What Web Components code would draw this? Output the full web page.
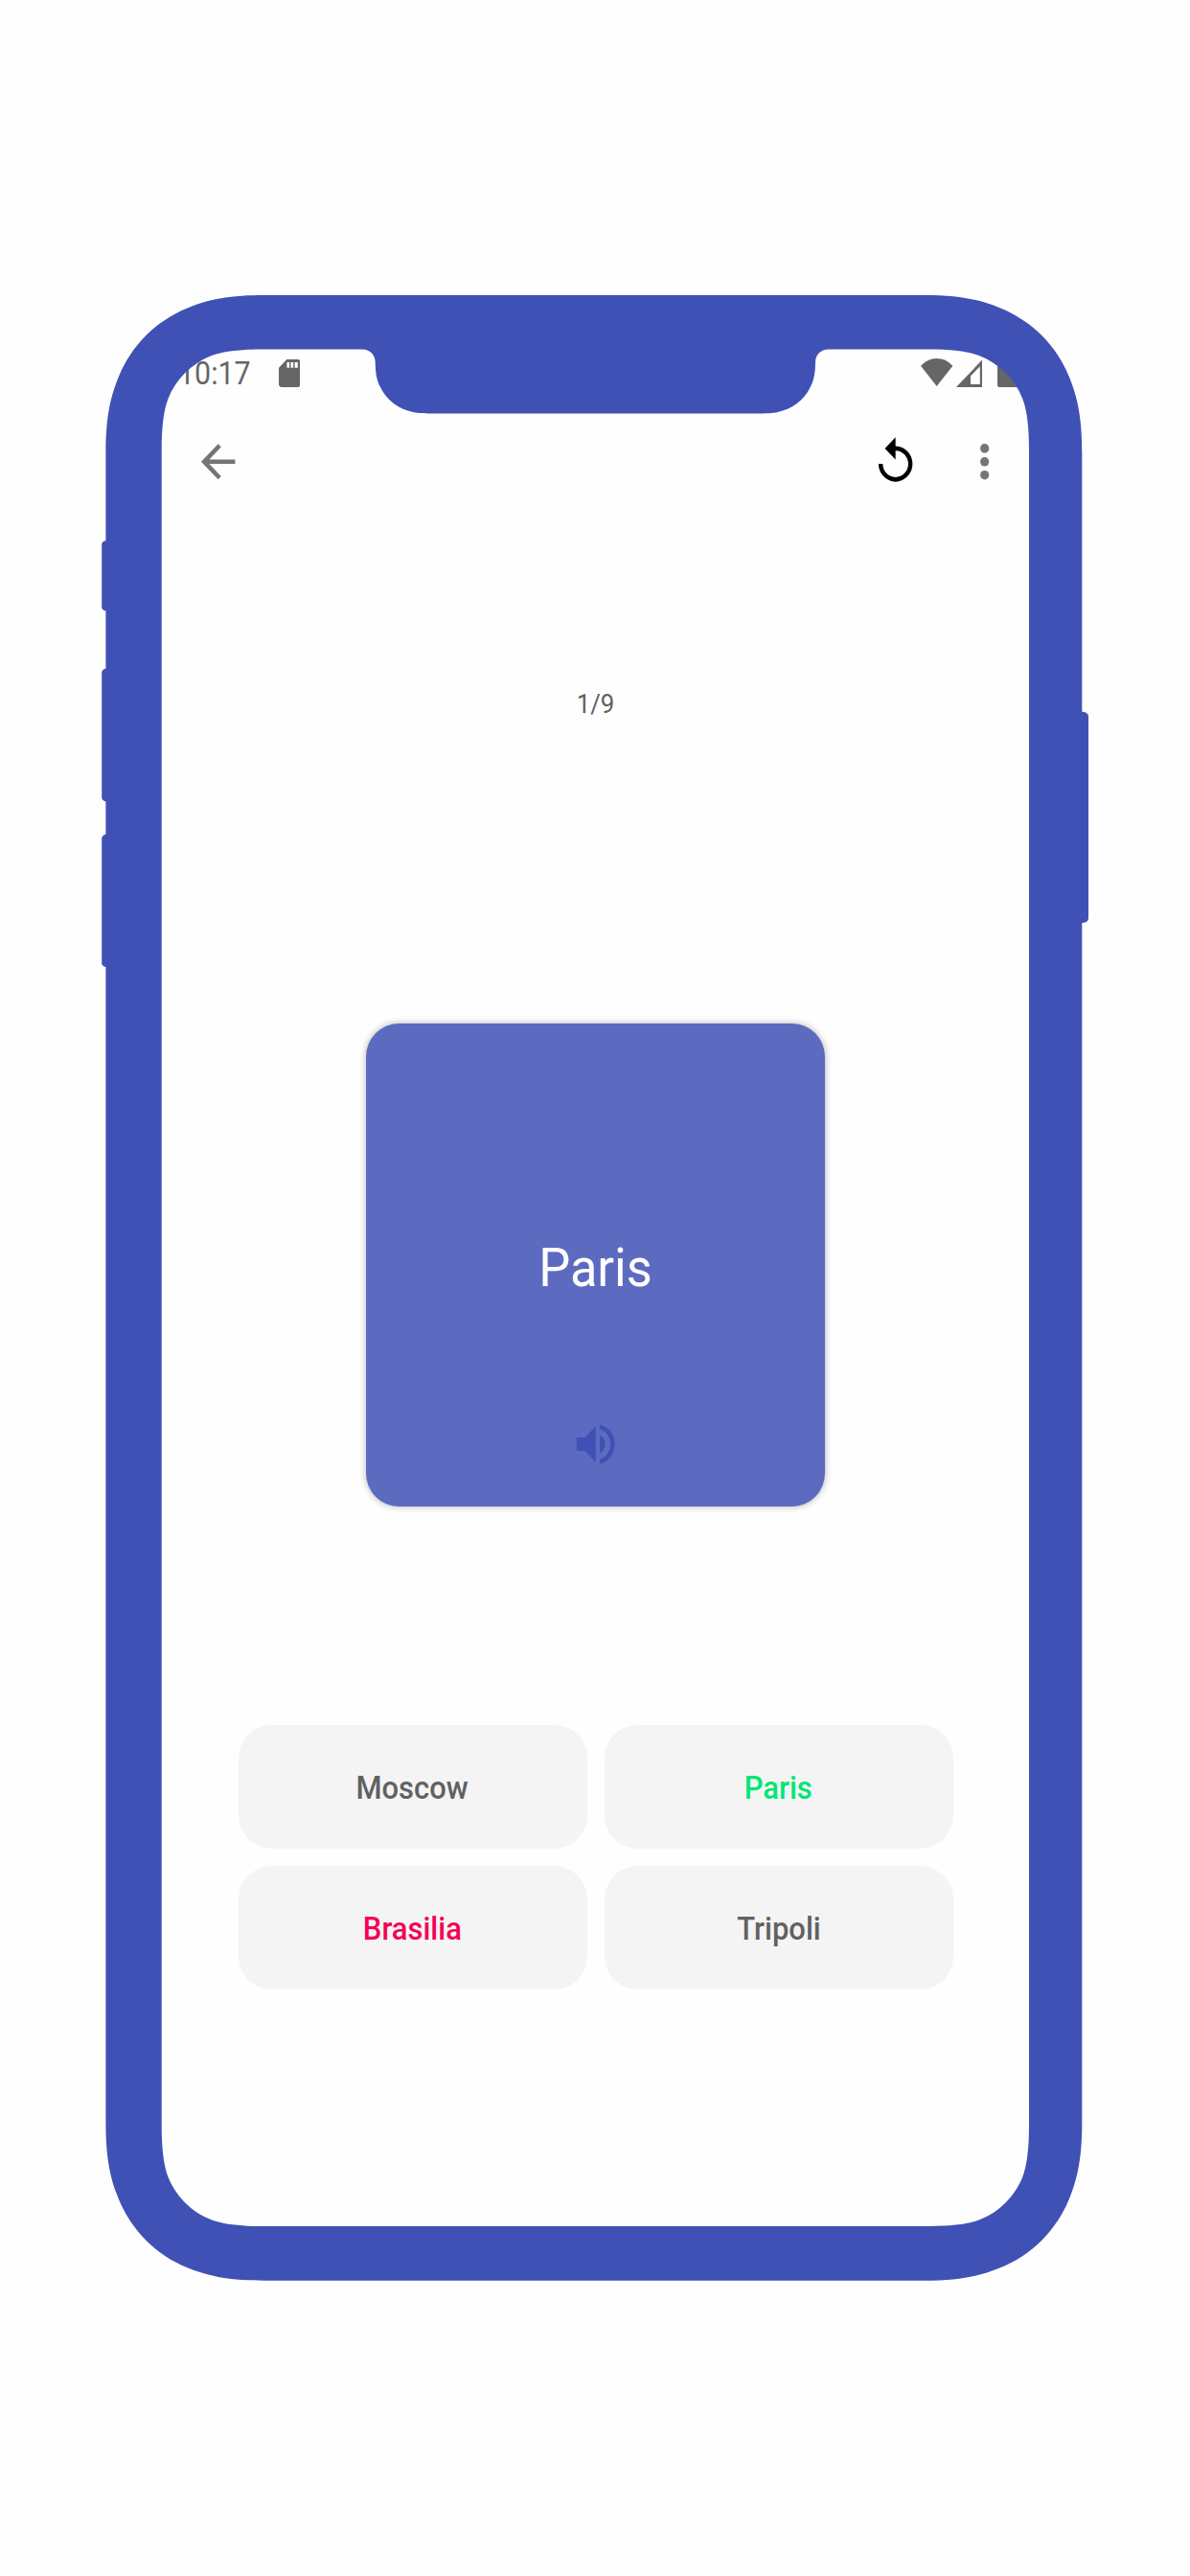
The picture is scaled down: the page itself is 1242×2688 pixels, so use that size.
<!DOCTYPE html>
<html lang="en">
<head>
<meta charset="utf-8">
<title>Flashcards quiz</title>
<style>
html,body{margin:0;background:#fefefe}
body{font-family:Roboto,"Liberation Sans",sans-serif;color:#616161}
</style>
</head>
<body>
<phone-mockup>
  <status-bar time="10:17"></status-bar>
  <app-bar></app-bar>
  <quiz-progress>1/9</quiz-progress>
  <flash-card>Paris</flash-card>
  <answer-grid>
    <answer-option>Moscow</answer-option>
    <answer-option state="right">Paris</answer-option>
    <answer-option state="wrong">Brasilia</answer-option>
    <answer-option>Tripoli</answer-option>
  </answer-grid>
</phone-mockup>
<script>
const define = (name, html, setup) => customElements.define(name, class extends HTMLElement {
  constructor() {
    super();
    this.attachShadow({ mode: 'open' });
  }
  connectedCallback() {
    this.shadowRoot.innerHTML = html;
    if (setup) setup(this, this.shadowRoot);
  }
});

const ICONS = {
  back: ['0 0 24 24', '<path d="M20 11H7.83l5.59-5.59L12 4l-8 8 8 8 1.41-1.41L7.83 13H20v-2z"/>'],
  replay: ['0 0 24 24', '<path d="M12 5V1L7 6l5 5V7c3.31 0 6 2.69 6 6s-2.69 6-6 6-6-2.69-6-6H4c0 4.42 3.58 8 8 8s8-3.58 8-8-3.58-8-8-8z"/>'],
  more: ['0 0 24 24', '<circle cx="12" cy="6" r="2.07"/><circle cx="12" cy="12" r="2.07"/><circle cx="12" cy="18" r="2.07"/>'],
  volume: ['0 0 24 24', '<path d="M3 9v6h4l5 5V4L7 9H3zm13.5 3c0-1.77-1.02-3.29-2.5-4.03v8.05c1.48-.73 2.5-2.25 2.5-4.02zM14 3.23v2.06c2.89.86 5 3.54 5 6.71s-2.11 5.85-5 6.71v2.06c4.01-.91 7-4.49 7-8.77s-2.99-7.86-7-8.77z"/>'],
  sd: ['4 2 16 20', '<path fill-rule="evenodd" d="M18 2h-8L4.02 8 4 20c0 1.1.9 2 2 2h12c1.1 0 2-.9 2-2V4c0-1.1-.9-2-2-2zM10 4h1.9v4H10zM12.9 4h1.9v4h-1.9zM15.8 4h2.3v4h-2.3z"/>'],
  wifi: ['0 0 33.3 29', '<path d="M0 7.8Q7 0 16.65 0T33.3 7.8L16.65 29z"/>'],
  signal: ['0 0 27.5 29', '<path fill-rule="evenodd" d="M27.5 0V29H0zM24.8 7.2L15 17.3V26h9.8z"/>'],
  battery: ['0 0 24 32', '<path d="M8 0h8v3h6q2 0 2 2v25q0 2-2 2H2q-2 0-2-2V5q0-2 2-2h6z"/>']
};

define('ui-icon', `<style>
  :host{display:block;flex:none}
  svg{display:block;width:100%;height:100%;fill:currentColor}
</style><svg preserveAspectRatio="none" aria-hidden="true"></svg>`, (el, root) => {
  const [box, body] = ICONS[el.getAttribute('name')];
  const svg = root.querySelector('svg');
  svg.setAttribute('viewBox', box);
  svg.innerHTML = body;
});

/* Smooth corners: bezier points as [x, y] distances from the corner, mirrored on the diagonal. */
const mirror = k => [...k, ...k.slice(0, -1).reverse().map(([a, b]) => [b, a])];
const OUTER = mirror([[0,165],[0,125],[5.4,105],[13.4,85.2],[19.9,69.1],[29.7,54.3],[42,42]]);
const INNER = mirror([[0,104],[0,80],[2.4,62.2],[6.9,51.1],[10.9,41.2],[16.9,32.1],[24.5,24.5]]);
const corner = (x, y, sx, sy, k) => {
  const p = k.map(([a, b]) => `${x + sx * a} ${y + sy * b}`);
  if (sx !== sy) p.reverse();
  return p[0] + ' C' + p.slice(1).join(' ');
};
const rounded = (l, t, r, b, k, top = '') =>
  'M' + corner(l, t, 1, 1, k) + top + ' L' + corner(r, t, -1, 1, k) +
  ' L' + corner(r, b, -1, -1, k) + ' L' + corner(l, b, 1, -1, k) + 'Z';
const NOTCH = ' L378 364.6C386 364.6 391.5 370 391.7 378C391.9 389 393 397 397 404C404 418.5 416.5 427 431 430C437 431.2 442 431.4 450 431.4H792.7C800.7 431.4 805.7 431.2 811.7 430C826.2 427 838.7 418.5 845.7 404C849.7 397 850.8 389 851 378C851.2 370 856.7 364.6 864.7 364.6';

define('phone-mockup', `<style>
  :host{display:block;position:relative;box-sizing:border-box;width:1242px;height:2688px;padding:364px 168px 365px 169px;overflow:hidden;background:#fefefe}
  main{display:flex;flex-direction:column;height:1959px}
  .frame{position:absolute;inset:0;width:1242px;height:2688px;pointer-events:none}
</style>
<main><slot></slot></main>
<svg class="frame" viewBox="0 0 1242 2688" fill="#3f51b5" aria-hidden="true">
  <path d="M112 564h-1.5q-4.3 1-4.3 4v65.5q0 3 4.3 4h1.5zM112 697.5h-1.5q-4.3 1-4.3 4.5v130q0 3 4.3 4.5h1.5zM112 870.5h-1.5q-4.3 1-4.3 4.5v130q0 3 4.3 4h1.5zM1128 742.7h2q6 .8 6 5v210.3q0 4.5-6 5h-2z"/>
  <path fill-rule="evenodd" d="${rounded(110.4, 308, 1129.3, 2379.7, OUTER)} ${rounded(168.7, 364.6, 1074, 2323, INNER, NOTCH)}"/>
</svg>`);

define('status-bar', `<style>
  :host{display:flex;align-items:flex-start;height:54px;padding:10.5px 9px 0 16.7px;box-sizing:border-box;color:#666}
  .time{font-size:33px;line-height:38px;width:90px;height:38px;margin-top:-3.4px;white-space:nowrap;transform-origin:0 0;transform:scaleX(.92)}
  .sd{width:22.5px;height:29px;margin-left:15px}
  .wifi{width:33.3px;height:29px;margin-left:auto;margin-top:-.5px}
  .signal{width:27.5px;height:29px;margin-left:3.2px}
  .battery{width:24px;height:32px;margin-left:16px;margin-top:-2.5px}
</style>
<span class="time"></span><ui-icon class="sd" name="sd"></ui-icon>
<ui-icon class="wifi" name="wifi"></ui-icon><ui-icon class="signal" name="signal"></ui-icon><ui-icon class="battery" name="battery"></ui-icon>`,
(el, root) => { root.querySelector('.time').textContent = el.getAttribute('time'); });

define('app-bar', `<style>
  :host{display:flex;align-items:center;height:128px;box-sizing:border-box;padding:0 20px 0 31.9px;color:#757575}
  ui-icon{width:53.3px;height:55.6px}
  .replay{margin-left:auto;color:#000}
  .more{margin-left:39.6px}
</style>
<ui-icon name="back"></ui-icon><ui-icon class="replay" name="replay"></ui-icon><ui-icon class="more" name="more"></ui-icon>`);

define('quiz-progress', `<style>
  :host{display:flex;justify-content:center;margin-top:171.6px;height:33.4px;font-size:28px;line-height:34px}
  span{transform:scaleX(.92)}
</style><span><slot></slot></span>`);

define('flash-card', `<style>
  :host{display:flex;flex-direction:column;align-items:center;box-sizing:border-box;align-self:center;width:479px;height:504px;margin-top:317.4px;padding-top:222px;border-radius:34px/35px;background:#5c6bc0;color:#fff;box-shadow:0 0 6px 1px rgba(0,0,0,.24)}
  span{font-size:56px;line-height:66px;transform:scaleX(.935)}
  ui-icon{width:53.3px;height:56px;margin:123px .6px 0 0;color:#3f51b5}
</style><span><slot></slot></span><ui-icon name="volume"></ui-icon>`);

define('answer-grid', `<style>
  :host{display:grid;grid-template-columns:364px 364px;grid-auto-rows:129px;gap:18px;justify-content:center;margin-top:227.6px}
</style><slot></slot>`);

define('answer-option', `<style>
  :host{display:flex;align-items:center;justify-content:center;box-sizing:border-box;padding-top:2px;border-radius:34px/35px;background:#f4f4f4;font-size:33.3px;font-weight:500}
  :host([state=right]){color:#00e676}
  :host([state=wrong]){color:#f50057}
  span{transform:scaleX(.93)}
</style><span><slot></slot></span>`);
</script>
</body>
</html>
